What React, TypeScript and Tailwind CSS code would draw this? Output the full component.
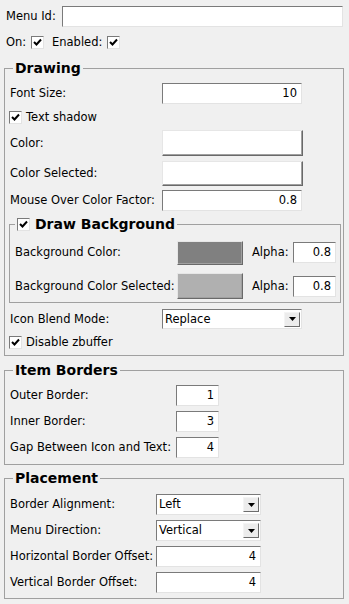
import React from "react";

const sunken =
  "border border-t-[#7a7a7a] border-l-[#7a7a7a] border-b-[#e3e3e3] border-r-[#e3e3e3] bg-white";

function Check({ className = "" }: { className?: string }) {
  return (
    <span
      className={`flex h-[13px] w-[13px] shrink-0 items-center justify-center ${sunken} ${className}`}
    >
      <svg width="9" height="9" viewBox="0 0 9 9">
        <polyline
          points="1,4 3.5,6.5 8,1.5"
          fill="none"
          stroke="#000"
          strokeWidth="2"
        />
      </svg>
    </span>
  );
}

function NumInput({ value, w }: { value: string; w: string }) {
  return (
    <div className={`flex h-[21px] items-center justify-end pr-[4px] ${sunken} ${w}`}>
      {value}
    </div>
  );
}

function Select({ value, w, h }: { value: string; w: string; h: string }) {
  return (
    <div className={`flex items-center ${sunken} ${w} ${h}`}>
      <span className="flex-1 pl-[2px]">{value}</span>
      <span className="mr-[1px] flex h-[15px] w-[16px] items-center justify-center border border-t-[#f4f4f4] border-l-[#f4f4f4] border-b-[#6d6d6d] border-r-[#6d6d6d] bg-[#ececec]">
        <svg width="7" height="4" viewBox="0 0 7 4">
          <polygon points="0,0 7,0 3.5,4" fill="#000" />
        </svg>
      </span>
    </div>
  );
}

function Swatch({ color, w, h }: { color: string; w: string; h: string }) {
  return (
    <div
      className={`border border-t-[#e6e6e6] border-l-[#e6e6e6] border-b-[#696969] border-r-[#696969] shadow-[inset_-1px_-1px_0_#a0a0a0] ${color} ${w} ${h}`}
    />
  );
}

function Group({
  title,
  children,
  className = "",
}: {
  title: string;
  children: React.ReactNode;
  className?: string;
}) {
  return (
    <div className={`relative mx-[4px] w-[340px] border border-[#a0a0a0] ${className}`}>
      <span className="absolute -top-[9px] left-[8px] bg-[#f0f0f0] px-[2px] text-[14px] font-bold leading-[16px]">
        {title}
      </span>
      {children}
    </div>
  );
}

export default function App() {
  return (
    <div className="h-[604px] w-[349px] overflow-hidden bg-[#f0f0f0] font-['DejaVu_Sans',sans-serif] text-[11.5px] leading-[13px] text-black">
      <div className="flex h-[21px] items-center px-[6px] mt-[6px]">
        <span>Menu Id:</span>
        <div className={`ml-auto h-[21px] w-[281px] ${sunken}`} />
      </div>
      <div className="mt-[6px] flex h-[19px] items-center pl-[6px]">
        <span className="w-[25px]">On:</span>
        <Check />
        <span className="ml-[8px] w-[55px]">Enabled:</span>
        <Check />
      </div>

      <Group title="Drawing" className="mt-[16px]">
        <div className="flex flex-col pl-[5px] pt-[14px]">
          <div className="flex h-[21px] items-center">
            <span className="w-[152px]">Font Size:</span>
            <NumInput value="10" w="w-[140px]" />
          </div>
          <div className="flex h-[26px] items-center gap-[4px] -ml-[1px]">
            <Check />
            <span>Text shadow</span>
          </div>
          <div className="flex h-[26px] items-center">
            <span className="w-[152px]">Color:</span>
            <Swatch color="bg-white" w="w-[141px]" h="h-[26px]" />
          </div>
          <div className="mt-[5px] flex h-[25px] items-center">
            <span className="w-[152px]">Color Selected:</span>
            <Swatch color="bg-white" w="w-[141px]" h="h-[25px]" />
          </div>
          <div className="mt-[4px] flex h-[21px] items-center">
            <span className="w-[152px] whitespace-nowrap">Mouse Over Color Factor:</span>
            <NumInput value="0.8" w="w-[140px]" />
          </div>

          <div className="relative -ml-[1px] mt-[13px] h-[79px] w-[332px] border border-[#a0a0a0]">
            <div className="absolute -top-[9px] left-[5px] flex items-center gap-[5px] bg-[#f0f0f0] px-[2px]">
              <Check />
              <span className="text-[14px] font-bold leading-[16px]">Draw Background</span>
            </div>
            <div className="flex flex-col pl-[5px] pt-[15px]">
              <div className="flex h-[25px] items-center">
                <span className="w-[162px]">Background Color:</span>
                <Swatch color="bg-[#808080]" w="w-[66px]" h="h-[24px]" />
                <span className="ml-[9px] w-[41px]">Alpha:</span>
                <NumInput value="0.8" w="w-[43px]" />
              </div>
              <div className="mt-[8px] flex h-[26px] items-center">
                <span className="w-[162px] whitespace-nowrap">Background Color Selected:</span>
                <Swatch color="bg-[#b0b0b0]" w="w-[66px]" h="h-[26px]" />
                <span className="ml-[9px] w-[41px]">Alpha:</span>
                <NumInput value="0.8" w="w-[43px]" />
              </div>
            </div>
          </div>

          <div className="mt-[6px] flex h-[20px] items-center">
            <span className="w-[152px]">Icon Blend Mode:</span>
            <Select value="Replace" w="w-[140px]" h="h-[20px]" />
          </div>
          <div className="flex h-[26px] items-center gap-[4px] -ml-[1px]">
            <Check />
            <span>Disable zbuffer</span>
          </div>
        </div>
      </Group>

      <Group title="Item Borders" className="mt-[14px]">
        <div className="flex flex-col gap-[5px] pb-[6px] pl-[5px] pt-[14px]">
          <div className="flex h-[21px] items-center">
            <span className="w-[166px]">Outer Border:</span>
            <NumInput value="1" w="w-[43px]" />
          </div>
          <div className="flex h-[21px] items-center">
            <span className="w-[166px]">Inner Border:</span>
            <NumInput value="3" w="w-[43px]" />
          </div>
          <div className="flex h-[21px] items-center">
            <span className="w-[166px] whitespace-nowrap">Gap Between Icon and Text:</span>
            <NumInput value="4" w="w-[43px]" />
          </div>
        </div>
      </Group>

      <Group title="Placement" className="mt-[13px]">
        <div className="flex flex-col gap-[5px] pb-[5px] pl-[5px] pt-[15px]">
          <div className="flex h-[21px] items-center">
            <span className="w-[146px]">Border Alignment:</span>
            <Select value="Left" w="w-[105px]" h="h-[21px]" />
          </div>
          <div className="flex h-[21px] items-center">
            <span className="w-[146px]">Menu Direction:</span>
            <Select value="Vertical" w="w-[105px]" h="h-[21px]" />
          </div>
          <div className="flex h-[21px] items-center">
            <span className="w-[146px] whitespace-nowrap">Horizontal Border Offset:</span>
            <NumInput value="4" w="w-[105px]" />
          </div>
          <div className="flex h-[21px] items-center">
            <span className="w-[146px] whitespace-nowrap">Vertical Border Offset:</span>
            <NumInput value="4" w="w-[105px]" />
          </div>
        </div>
      </Group>
    </div>
  );
}
